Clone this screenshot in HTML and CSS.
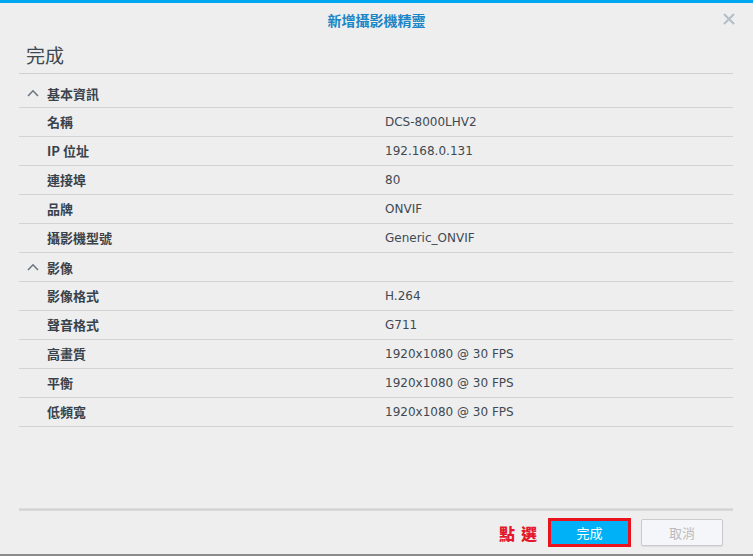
FILE: index.html
```html
<!DOCTYPE html>
<html lang="zh-Hant">
<head>
<meta charset="utf-8">
<title>新增攝影機精靈</title>
<link rel="stylesheet" href="styles.css">
</head>
<body>
<div class="window">
  <div class="topbar"></div>
  <div class="titlebar">
    <span class="title">新增攝影機精靈</span>
    <span class="close" aria-label="close">
      <svg width="12" height="12" viewBox="0 0 12 12"><path d="M1 1L11 11M11 1L1 11" stroke="#b4c0c9" stroke-width="2.2" fill="none"/></svg>
    </span>
  </div>
  <div class="main">
    <h1 class="heading">完成</h1>
    <div class="table">
      <div class="section">
        <svg class="chev" width="12" height="8" viewBox="0 0 12 8"><path d="M1 7L6 1.8L11 7" stroke="#6c7681" stroke-width="1.6" fill="none"/></svg>
        <span>基本資訊</span>
      </div>
      <div class="row"><span class="label">名稱</span><span class="value">DCS-8000LHV2</span></div>
      <div class="row"><span class="label">IP 位址</span><span class="value">192.168.0.131</span></div>
      <div class="row"><span class="label">連接埠</span><span class="value">80</span></div>
      <div class="row"><span class="label">品牌</span><span class="value">ONVIF</span></div>
      <div class="row"><span class="label">攝影機型號</span><span class="value">Generic_ONVIF</span></div>
      <div class="section">
        <svg class="chev" width="12" height="8" viewBox="0 0 12 8"><path d="M1 7L6 1.8L11 7" stroke="#6c7681" stroke-width="1.6" fill="none"/></svg>
        <span>影像</span>
      </div>
      <div class="row"><span class="label">影像格式</span><span class="value">H.264</span></div>
      <div class="row"><span class="label">聲音格式</span><span class="value">G711</span></div>
      <div class="row"><span class="label">高畫質</span><span class="value">1920x1080 @ 30 FPS</span></div>
      <div class="row"><span class="label">平衡</span><span class="value">1920x1080 @ 30 FPS</span></div>
      <div class="row"><span class="label">低頻寬</span><span class="value">1920x1080 @ 30 FPS</span></div>
    </div>
  </div>
  <div class="footer">
    <div class="separator"></div>
    <div class="buttons">
      <span class="hint"><span>點</span><span>選</span></span>
      <button class="btn btn-primary">完成</button>
      <button class="btn btn-cancel">取消</button>
    </div>
  </div>
  <div class="bottomedge"></div>
</div>
</body>
</html>
```
FILE: styles.css
```css
html, body {
  margin: 0;
  padding: 0;
}
body {
  background: #eeeeee;
  font-family: "DejaVu Sans", "Noto Sans CJK TC", sans-serif;
  color: #3d4751;
}
.window {
  width: 753px;
  height: 556px;
  display: flex;
  flex-direction: column;
  background: #eeeeee;
}
.topbar {
  height: 3px;
  background: #00a6f0;
}
.titlebar {
  position: relative;
  height: 34px;
  line-height: 34px;
  text-align: center;
}
.title {
  font-family: "Noto Sans CJK TC", sans-serif;
  font-weight: 700;
  font-size: 14px;
  color: #1a86c6;
}
.close {
  position: absolute;
  right: 18px;
  top: 10px;
  width: 12px;
  height: 12px;
  line-height: 0;
}
.main {
  flex: 1;
  padding: 0 20px 0 19px;
}
.heading {
  margin: 0;
  height: 37px;
  line-height: 36px;
  padding-left: 7px;
  box-sizing: border-box;
  border-bottom: 1px solid #cfcfcf;
  font-family: "Noto Sans CJK TC", sans-serif;
  font-weight: 400;
  font-size: 19px;
  color: #3f4850;
}
.table {
  margin-top: 5px;
}
.section, .row {
  height: 29px;
  box-sizing: border-box;
  border-bottom: 1px solid #d3d3d3;
  display: flex;
  align-items: center;
}
.section {
  padding-left: 8px;
  font-family: "Noto Sans CJK TC", sans-serif;
  font-weight: 700;
  font-size: 13px;
  color: #3a434c;
}
.chev {
  margin-right: 8px;
  margin-top: -1px;
}
.row {
  display: grid;
  grid-template-columns: 366px 1fr;
}
.label {
  padding-left: 28px;
  font-family: "Noto Sans CJK TC", sans-serif;
  font-weight: 700;
  font-size: 13px;
  line-height: 18px;
  color: #38424b;
}
.value {
  font-size: 12px;
  line-height: 16px;
  color: #3f4952;
}
.footer {
  padding: 0 20px 0 19px;
}
.separator {
  height: 3px;
  background: linear-gradient(#e0e0e0, #d3d3d3 50%, #dcdcdc);
}
.buttons {
  height: 43px;
  display: flex;
  align-items: flex-start;
  justify-content: flex-end;
  padding-top: 7px;
  padding-right: 10px;
  box-sizing: border-box;
}
.hint {
  display: flex;
  gap: 6px;
  font-family: "Noto Sans CJK TC", sans-serif;
  font-weight: 900;
  font-size: 16px;
  line-height: 18px;
  color: #e3192b;
  margin-top: 6px;
  margin-right: 11px;
}
.btn {
  font-family: "Noto Sans CJK TC", sans-serif;
  font-size: 13px;
  padding: 0;
  margin: 0;
  cursor: pointer;
}
.btn-primary {
  width: 83px;
  height: 29px;
  border: 3px solid #e8131d;
  background: #00b1f7;
  color: #ffffff;
}
.btn-cancel {
  width: 82px;
  height: 27px;
  margin-top: 1px;
  margin-left: 10px;
  border: 1px solid #c9cacd;
  border-radius: 2px;
  background: #f5f6fa;
  color: #bcbcbc;
  box-shadow: 0 1px 1px rgba(0,0,0,0.08);
}
.bottomedge {
  height: 2px;
  background: #8a8a8a;
}
```
